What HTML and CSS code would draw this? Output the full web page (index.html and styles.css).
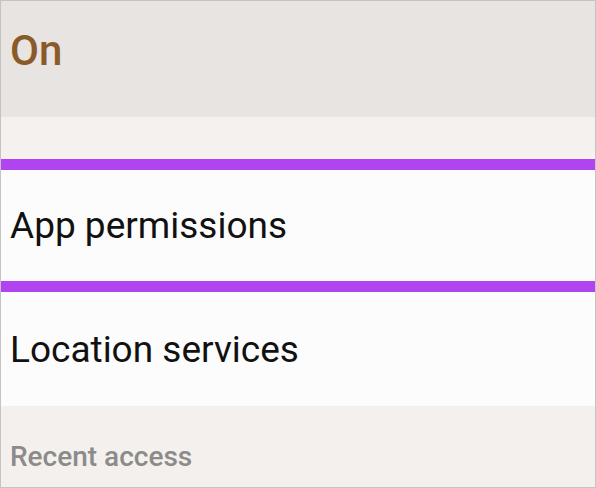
FILE: index.html
```html
<!DOCTYPE html>
<html>
<head>
<meta charset="utf-8">
<link rel="stylesheet" href="styles.css">
</head>
<body>
<div class="frame">
  <div class="header"><span class="on">On</span></div>
  <div class="gap"></div>
  <div class="bar"></div>
  <div class="item item-first"><span>App permissions</span></div>
  <div class="bar"></div>
  <div class="item item-second"><span>Location services</span></div>
  <div class="section"><span>Recent access</span></div>
</div>
</body>
</html>
```
FILE: styles.css
```css
html, body {
  margin: 0;
  padding: 0;
  background: #ffffff;
}
.frame {
  width: 596px;
  height: 488px;
  box-sizing: border-box;
  border: 1px solid #c4c4c4;
  display: flex;
  flex-direction: column;
  font-family: Roboto, "Noto Sans", sans-serif;
  overflow: hidden;
}
.header {
  height: 116px;
  background: #e8e4e1;
  display: flex;
  align-items: center;
  padding-left: 9px;
  padding-bottom: 18px;
  box-sizing: border-box;
}
.on {
  font-size: 42px;
  font-weight: 500;
  color: #8b5a2b;
}
.gap {
  height: 42px;
  background: #f4f1ee;
}
.bar {
  height: 11px;
  background: #b044f0;
}
.item {
  background: #fcfcfc;
  display: flex;
  align-items: center;
  padding-left: 9px;
  font-size: 37px;
  color: #111111;
}
.item-first {
  height: 111px;
}
.item-second {
  height: 114px;
}
.section {
  flex: 1;
  background: #f3f0ed;
  padding-left: 9px;
  display: flex;
  align-items: flex-end;
  padding-bottom: 14px;
  font-size: 28px;
  font-weight: 500;
  color: #8c8b8a;
}
```
